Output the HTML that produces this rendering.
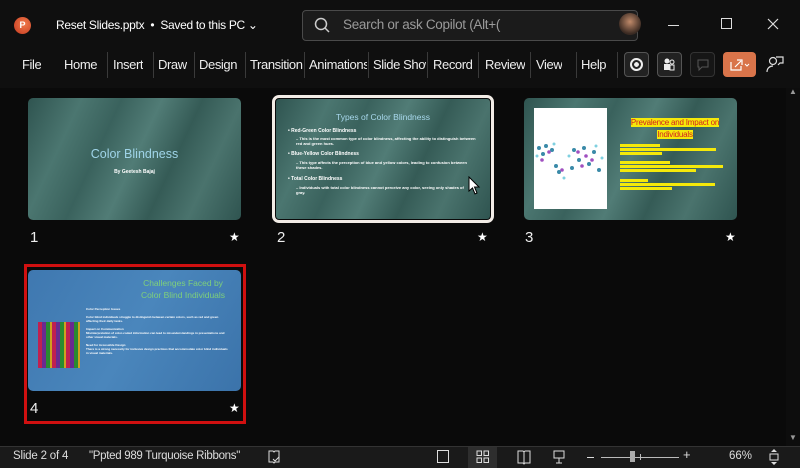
<!DOCTYPE html>
<html><head><style>
*{margin:0;padding:0;box-sizing:border-box}
body{width:800px;height:468px;background:#0a0a0a;font-family:"Liberation Sans",sans-serif;color:#e8e8e8;position:relative;overflow:hidden}
.abs{position:absolute}
.tab{position:absolute;top:57px;font-size:13px;letter-spacing:-0.4px;color:#eee;white-space:nowrap;overflow:hidden}
.sep{position:absolute;top:52px;width:1px;height:26px;background:#3a3a3a}
.slide{position:absolute;border-radius:5px;overflow:hidden}
.green{background:linear-gradient(115deg,#2f5450 0%,#4b7670 20%,#3a625d 35%,#517c76 50%,#355b56 65%,#4a736d 80%,#2f5450 100%)}
.num{position:absolute;font-size:15px;color:#eee}
.star{position:absolute;font-size:12px;color:#fff}
.t{position:absolute;color:#fff;font-size:4px;line-height:5px;font-weight:bold}
</style></head><body>
<div class="abs" style="left:0;top:0;width:800px;height:88px;background:#0f0f0f"></div>
<div class="abs" style="left:14px;top:17px;width:17px;height:17px;border-radius:50%;background:radial-gradient(circle at 60% 40%,#f07a4a,#c4381f);font-size:9px;color:#fff;font-weight:bold;text-align:center;line-height:17px">P</div>
<div class="abs" style="left:56px;top:18px;font-size:12px;letter-spacing:-0.3px;color:#fff;white-space:nowrap">Reset Slides.pptx &nbsp;•&nbsp; Saved to this PC ⌄</div>
<div class="abs" style="left:302px;top:10px;width:336px;height:31px;border:1px solid #4a4a4a;border-radius:4px;background:#1b1b1b"></div>
<svg class="abs" style="left:313px;top:16px" width="18" height="18"><circle cx="8" cy="8" r="5.5" fill="none" stroke="#ccc" stroke-width="1.5"/><path d="M12 12 L16 16" stroke="#ccc" stroke-width="1.5"/></svg>
<div class="abs" style="left:343px;top:17px;font-size:13.5px;letter-spacing:-0.3px;color:#9a9a9a;white-space:nowrap">Search or ask Copilot (Alt+(</div>
<div class="abs" style="left:619px;top:13px;width:22px;height:22px;border-radius:50%;background:radial-gradient(circle at 50% 40%,#c08a6a,#3a2a22 70%)"></div>
<div class="abs" style="left:668px;top:25px;width:11px;height:1px;background:#ddd"></div>
<div class="abs" style="left:721px;top:18px;width:11px;height:11px;border:1px solid #ddd"></div>
<svg class="abs" style="left:767px;top:18px" width="12" height="12"><path d="M1 1L11 11M11 1L1 11" stroke="#ddd" stroke-width="1.2"/></svg>
<div class="tab" style="left:22px">File</div>
<div class="tab" style="left:64px">Home</div><div class="sep" style="left:107px"></div>
<div class="tab" style="left:113px">Insert</div><div class="sep" style="left:153px"></div>
<div class="tab" style="left:158px">Draw</div><div class="sep" style="left:194px"></div>
<div class="tab" style="left:199px">Design</div><div class="sep" style="left:245px"></div>
<div class="tab" style="left:250px;width:53px">Transition</div><div class="sep" style="left:304px"></div>
<div class="tab" style="left:309px;width:58px">Animations</div><div class="sep" style="left:368px"></div>
<div class="tab" style="left:373px;width:53px">Slide Show</div><div class="sep" style="left:427px"></div>
<div class="tab" style="left:433px">Record</div><div class="sep" style="left:478px"></div>
<div class="tab" style="left:485px">Review</div><div class="sep" style="left:530px"></div>
<div class="tab" style="left:536px">View</div><div class="sep" style="left:576px"></div>
<div class="tab" style="left:581px">Help</div><div class="sep" style="left:617px"></div>
<div class="abs" style="left:624px;top:52px;width:25px;height:25px;border:1px solid #555;border-radius:4px;background:#222"><div style="margin:5px;width:13px;height:13px;border:2px solid #eee;border-radius:50%;background:radial-gradient(#eee 35%,transparent 40%)"></div></div>
<div class="abs" style="left:657px;top:52px;width:25px;height:25px;border:1px solid #555;border-radius:4px;background:#222"><svg width="23" height="23"><circle cx="9" cy="8" r="2.5" fill="#eee"/><rect x="6" y="11" width="6" height="6" fill="#eee"/><circle cx="14" cy="9" r="2" fill="none" stroke="#eee"/><rect x="12" y="12" width="4" height="5" fill="none" stroke="#eee"/></svg></div>
<div class="abs" style="left:690px;top:52px;width:25px;height:25px;border:1px solid #333;border-radius:4px;background:#161616"><svg width="23" height="23"><path d="M7 7h10v7h-6l-3 3v-3h-1z" fill="none" stroke="#555"/></svg></div>
<div class="abs" style="left:723px;top:52px;width:33px;height:25px;border-radius:4px;background:#d9744a"><svg width="33" height="25"><path d="M8 10v8h10v-4M12 15l6-6M14 8h5v5" fill="none" stroke="#fff" stroke-width="1.2"/><path d="M22 12l2 2 2-2" fill="none" stroke="#fff"/></svg></div>
<svg class="abs" style="left:765px;top:54px" width="20" height="20"><circle cx="8" cy="7" r="3.5" fill="none" stroke="#ddd" stroke-width="1.2"/><path d="M2 18c0-4 3-6 6-6M11 3h7v6h-3l-2 2" fill="none" stroke="#ddd" stroke-width="1.2"/></svg>
<div class="abs" style="left:786px;top:88px;width:14px;height:358px;background:#0d0d0d"></div>
<div class="abs" style="left:789px;top:87px;font-size:8px;color:#999">▲</div>
<div class="abs" style="left:789px;top:433px;font-size:8px;color:#999">▼</div>

<div class="slide green" style="left:28px;top:98px;width:213px;height:122px">
 <div class="abs" style="left:0;width:213px;top:49px;text-align:center;font-size:12.5px;color:#9fd4e8">Color Blindness</div>
 <div class="abs" style="left:0;width:213px;top:71px;text-align:center;font-size:5px;color:#fff;font-weight:bold">By Geetesh Bajaj</div>
</div>
<div class="num" style="left:30px;top:229px">1</div><div class="star" style="left:229px;top:230px">★</div>

<div class="abs" style="left:272px;top:95px;width:222px;height:128px;border:3px solid #f2ece6;border-radius:7px"></div>
<div class="slide green" style="left:276px;top:99px;width:214px;height:120px;border-radius:3px">
 <div class="abs" style="left:0;width:214px;top:13px;text-align:center;font-size:8.5px;color:#a8d8ec">Types of Color Blindness</div>
 <div class="t" style="left:12px;top:30px;font-size:5px">• Red-Green Color Blindness</div>
 <div class="t" style="left:20px;top:37px;width:180px">– This is the most common type of color blindness, affecting the ability to distinguish between red and green hues.</div>
 <div class="t" style="left:12px;top:53px;font-size:5px">• Blue-Yellow Color Blindness</div>
 <div class="t" style="left:20px;top:61px;width:180px">– This type affects the perception of blue and yellow colors, leading to confusion between these shades.</div>
 <div class="t" style="left:12px;top:78px;font-size:5px">• Total Color Blindness</div>
 <div class="t" style="left:20px;top:86px;width:170px">– Individuals with total color blindness cannot perceive any color, seeing only shades of gray.</div>
</div>
<svg class="abs" style="left:468px;top:176px" width="14" height="20"><path d="M1 1 L1 15 L4.5 12 L7 18 L9 17 L6.5 11 L11 11 Z" fill="#fff" stroke="#000" stroke-width="1"/></svg>
<div class="num" style="left:277px;top:229px">2</div><div class="star" style="left:477px;top:230px">★</div>

<div class="slide green" style="left:524px;top:98px;width:213px;height:122px">
 <div class="abs" style="left:10px;top:10px;width:73px;height:101px;background:#fff"></div>
 <svg class="abs" style="left:10px;top:40px" width="73" height="50">
  <g fill="#3a8aa8"><circle cx="5" cy="10" r="2"/><circle cx="12" cy="8" r="2"/><circle cx="18" cy="12" r="2"/><circle cx="9" cy="16" r="2"/><circle cx="22" cy="28" r="2"/><circle cx="25" cy="34" r="2"/><circle cx="40" cy="12" r="2"/><circle cx="50" cy="10" r="2"/><circle cx="60" cy="14" r="2"/><circle cx="45" cy="22" r="2"/><circle cx="55" cy="26" r="2"/><circle cx="65" cy="32" r="2"/><circle cx="38" cy="30" r="2"/></g>
  <g fill="#a050c0"><circle cx="15" cy="14" r="1.8"/><circle cx="28" cy="32" r="1.8"/><circle cx="44" cy="14" r="1.8"/><circle cx="52" cy="18" r="1.8"/><circle cx="58" cy="22" r="1.8"/><circle cx="48" cy="28" r="1.8"/><circle cx="8" cy="22" r="1.8"/></g>
  <g fill="#7fd0e0"><circle cx="20" cy="6" r="1.5"/><circle cx="35" cy="18" r="1.5"/><circle cx="62" cy="8" r="1.5"/><circle cx="30" cy="40" r="1.5"/><circle cx="68" cy="20" r="1.5"/><circle cx="3" cy="18" r="1.5"/></g>
 </svg>
 <div class="abs" style="left:96px;top:19px;width:110px;font-size:8px;letter-spacing:-0.2px;line-height:12px;text-align:center;color:#d32020"><span style="background:#f5e90a">Prevalence and Impact on</span><br><span style="background:#f5e90a">Individuals</span></div>
 <div class="abs" style="left:96px;top:46px;width:40px;height:3px;background:#f5e90a"></div>
 <div class="abs" style="left:96px;top:50px;width:96px;height:3px;background:#f5e90a"></div>
 <div class="abs" style="left:96px;top:54px;width:42px;height:3px;background:#f5e90a"></div>
 <div class="abs" style="left:96px;top:63px;width:50px;height:3px;background:#f5e90a"></div>
 <div class="abs" style="left:96px;top:67px;width:103px;height:3px;background:#f5e90a"></div>
 <div class="abs" style="left:96px;top:71px;width:76px;height:3px;background:#f5e90a"></div>
 <div class="abs" style="left:96px;top:81px;width:28px;height:3px;background:#f5e90a"></div>
 <div class="abs" style="left:96px;top:85px;width:95px;height:3px;background:#f5e90a"></div>
 <div class="abs" style="left:96px;top:89px;width:52px;height:3px;background:#f5e90a"></div>
</div>
<div class="num" style="left:525px;top:229px">3</div><div class="star" style="left:725px;top:230px">★</div>

<div class="abs" style="left:24px;top:264px;width:222px;height:160px;border:3px solid #d01010"></div>
<div class="slide" style="left:28px;top:270px;width:213px;height:121px;background:linear-gradient(120deg,#3f78b0,#4a86bc 50%,#3b73aa)">
 <div class="abs" style="left:100px;width:110px;top:7px;text-align:center;font-size:8.5px;line-height:12px;color:#7fd07a">Challenges Faced by<br>Color Blind Individuals</div>
 <div class="abs" style="left:10px;top:52px;width:42px;height:46px;background:repeating-linear-gradient(90deg,#c02050 0 4px,#6a2a90 4px 8px,#2a8a30 8px 12px,#d0a020 12px 14px)"></div>
 <div class="t" style="left:58px;top:37px;width:145px;font-size:3px;line-height:4px">Color Perception Issues<br><br>Color blind individuals struggle to distinguish between certain colors, such as red and green affecting their daily tasks.<br><br>Impact on Communication<br>Misinterpretation of color-coded information can lead to misunderstandings in presentations and other visual materials.<br><br>Need for Accessible Design<br>There is a strong necessity for inclusive design practices that accommodate color blind individuals in visual materials.</div>
</div>
<div class="num" style="left:30px;top:400px">4</div><div class="star" style="left:229px;top:401px">★</div>

<div class="abs" style="left:0;top:446px;width:800px;height:22px;background:#1a1a1a;border-top:1px solid #333"></div>
<div class="abs" style="left:13px;top:450px;font-size:11.5px;letter-spacing:-0.2px;color:#ddd">Slide 2 of 4</div>
<div class="abs" style="left:89px;top:450px;font-size:11.5px;letter-spacing:-0.3px;color:#ddd;white-space:nowrap">"Ppted 989 Turquoise Ribbons"</div>
<svg class="abs" style="left:266px;top:449px" width="16" height="16"><path d="M3 2h4l1 1 1-1h4v11H9l-1 1-1-1H3z" fill="none" stroke="#ddd"/><path d="M7 10l2 2 4-4" fill="none" stroke="#ddd"/></svg>
<div class="abs" style="left:437px;top:450px;width:12px;height:13px;border:1px solid #ddd"></div>
<div class="abs" style="left:468px;top:447px;width:29px;height:21px;background:#2e2e2e"></div>
<svg class="abs" style="left:476px;top:450px" width="14" height="14"><g fill="none" stroke="#ddd"><rect x="1" y="1" width="4.5" height="4.5"/><rect x="8" y="1" width="4.5" height="4.5"/><rect x="1" y="8" width="4.5" height="4.5"/><rect x="8" y="8" width="4.5" height="4.5"/></g></svg>
<svg class="abs" style="left:516px;top:449px" width="16" height="16"><path d="M2 2h5l1 1 1-1h5v12H9l-1 1-1-1H2z M8 3v11" fill="none" stroke="#ddd"/></svg>
<svg class="abs" style="left:552px;top:449px" width="14" height="16"><path d="M2 2h10v7H2z M7 9v5 M4 14h6" fill="none" stroke="#ddd"/></svg>
<div class="abs" style="left:587px;top:457px;width:7px;height:1px;background:#ddd"></div>
<div class="abs" style="left:601px;top:457px;width:78px;height:1px;background:#bbb"></div>
<div class="abs" style="left:640px;top:454px;width:1px;height:6px;background:#bbb"></div>
<div class="abs" style="left:630px;top:451px;width:5px;height:11px;background:#aaa"></div>
<div class="abs" style="left:683px;top:447px;font-size:13px;color:#ddd">+</div>
<div class="abs" style="left:729px;top:450px;font-size:11.5px;color:#ddd">66%</div>
<svg class="abs" style="left:766px;top:448px" width="16" height="18"><path d="M8 1l3 3H5z M8 17l3-3H5z" fill="#ddd"/><rect x="4" y="6" width="8" height="6" fill="none" stroke="#ddd"/></svg>
</body></html>
